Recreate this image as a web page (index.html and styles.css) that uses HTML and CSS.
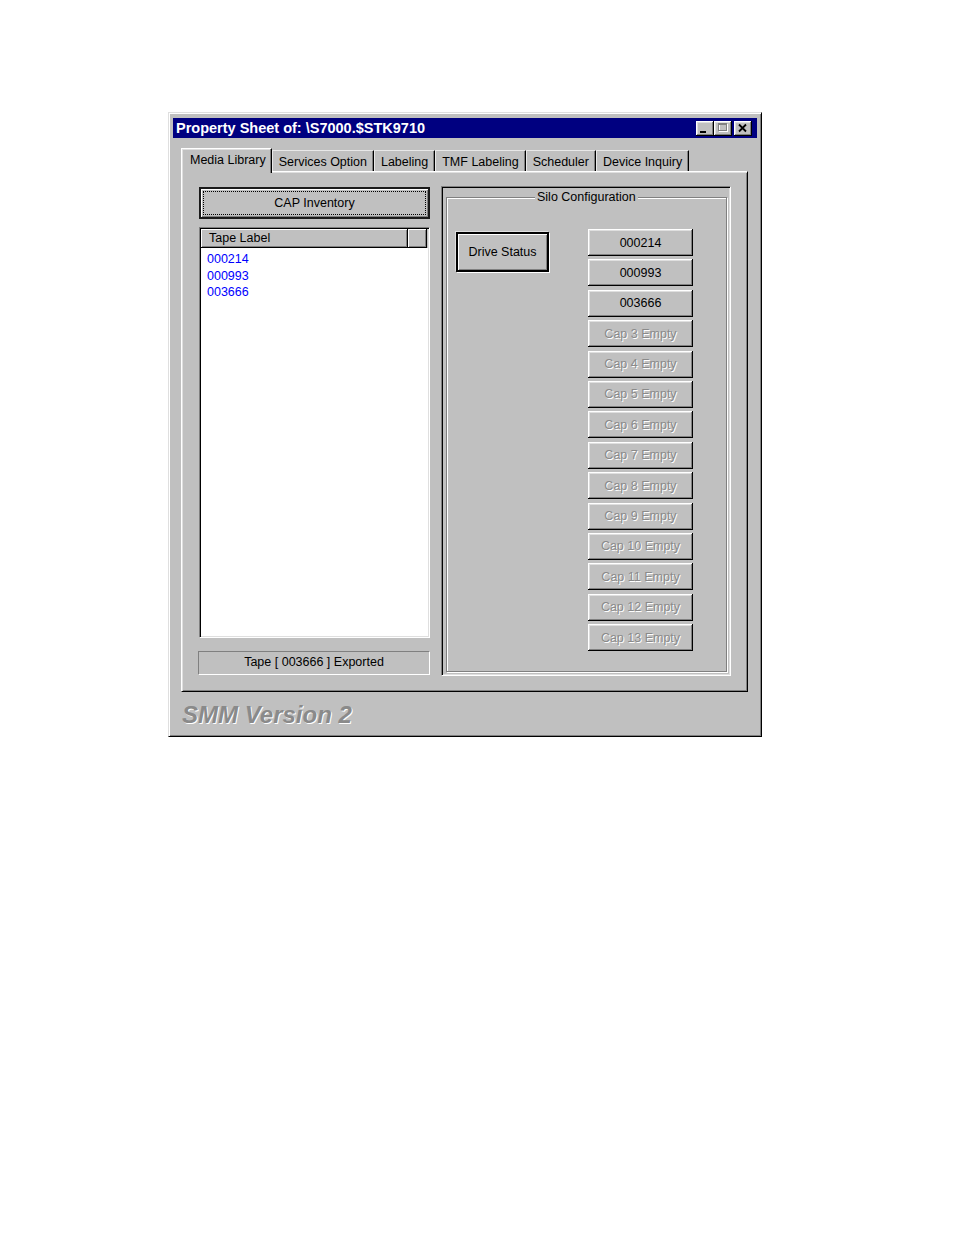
FILE: index.html
```html
<!DOCTYPE html>
<html>
<head>
<meta charset="utf-8">
<title>Property Sheet</title>
<link rel="stylesheet" href="styles.css">
</head>
<body>
<div class="window">
  <div class="titlebar">
    <span class="title">Property Sheet of: \S7000.$STK9710</span>
    <div class="tbtns">
      <span class="tbtn"><svg width="18" height="15" viewBox="0 0 18 15"><rect x="4" y="10" width="6" height="2" fill="#000"/></svg></span>
      <span class="tbtn"><svg width="18" height="15" viewBox="0 0 18 15"><rect x="5.5" y="3.5" width="8" height="7" fill="none" stroke="#fff"/><rect x="4.5" y="2.5" width="8" height="7" fill="none" stroke="#808080"/><rect x="4" y="2" width="9" height="2" fill="#808080"/></svg></span>
      <span class="tbtn close"><svg width="18" height="15" viewBox="0 0 18 15"><path d="M5 3.5 L12 10.5 M12 3.5 L5 10.5" stroke="#000" stroke-width="1.8" fill="none"/></svg></span>
    </div>
  </div>

  <div class="tabs">
    <div class="tab active">Media Library</div>
    <div class="tab">Services Option</div>
    <div class="tab">Labeling</div>
    <div class="tab">TMF Labeling</div>
    <div class="tab">Scheduler</div>
    <div class="tab">Device Inquiry</div>
  </div>

  <div class="panel">
    <div class="left">
      <div class="btn default cap"><span class="focus">CAP Inventory</span></div>
      <div class="list">
        <div class="lhead">
          <div class="hcol first">Tape Label</div>
          <div class="hcol second"></div>
        </div>
        <div class="lbody">
          <div class="item">000214</div>
          <div class="item">000993</div>
          <div class="item">003666</div>
        </div>
      </div>
      <div class="status">Tape [ 003666 ] Exported</div>
    </div>

    <div class="silo">
      <fieldset class="group">
        <legend>Silo Configuration</legend>
        <div class="silo-body">
          <div class="btn drive">Drive Status</div>
          <div class="caps">
            <div class="btn cbtn">000214</div>
            <div class="btn cbtn">000993</div>
            <div class="btn cbtn">003666</div>
            <div class="btn cbtn disabled">Cap 3 Empty</div>
            <div class="btn cbtn disabled">Cap 4 Empty</div>
            <div class="btn cbtn disabled">Cap 5 Empty</div>
            <div class="btn cbtn disabled">Cap 6 Empty</div>
            <div class="btn cbtn disabled">Cap 7 Empty</div>
            <div class="btn cbtn disabled">Cap 8 Empty</div>
            <div class="btn cbtn disabled">Cap 9 Empty</div>
            <div class="btn cbtn disabled">Cap 10 Empty</div>
            <div class="btn cbtn disabled">Cap 11 Empty</div>
            <div class="btn cbtn disabled">Cap 12 Empty</div>
            <div class="btn cbtn disabled">Cap 13 Empty</div>
          </div>
        </div>
      </fieldset>
    </div>
  </div>

  <div class="footer">SMM Version 2</div>
</div>
</body>
</html>
```

FILE: styles.css
```css
* { box-sizing: border-box; }

body {
  margin: 0;
  background: #fff;
  font-family: "Liberation Sans", Arial, sans-serif;
  font-size: 12.5px;
  color: #000;
}

.window {
  margin: 112px 0 0 168px;
  width: 594px;
  height: 625px;
  background: #c0c0c0;
  border: 1px solid;
  border-color: #dfdfdf #000 #000 #dfdfdf;
  box-shadow: inset 1px 1px #fff, inset -1px -1px #808080;
  padding: 5px 4px 4px 4px;
  display: flex;
  flex-direction: column;
}

.titlebar {
  height: 20px;
  background: #000080;
  color: #fff;
  display: flex;
  align-items: center;
  padding: 0 5px 0 3px;
}

.title {
  font-weight: bold;
  font-size: 14.5px;
  line-height: 20px;
  white-space: nowrap;
}

.tbtns {
  margin-left: auto;
  display: flex;
  align-items: center;
}

.tbtn {
  width: 18px;
  height: 15px;
  background: #c0c0c0;
  box-shadow: inset -1px -1px #000, inset 1px 1px #fff, inset -2px -2px #808080, inset 2px 2px #dfdfdf;
  display: block;
}

.tbtn svg { display: block; }

.tbtn.close { margin-left: 2px; }

.tabs {
  display: flex;
  align-items: flex-end;
  height: 25px;
  margin: 10px 0 -2px 8px;
  position: relative;
  z-index: 1;
}

.tab {
  height: 21px;
  margin-bottom: 2px;
  padding: 4px 6px 0 6px;
  line-height: 14px;
  white-space: nowrap;
  border-left: 1px solid #e8e8e8;
  border-top: 1px solid #e8e8e8;
  border-right: 1px solid #000;
  box-shadow: inset -1px 0 #808080;
  background: #c0c0c0;
}

.tab.active {
  height: 25px;
  margin-bottom: 0;
  padding: 4px 5px 0 8px;
  border-left-color: #fff;
  border-top-color: #fff;
  box-shadow: inset -1px 0 #808080, inset 1px 1px #dfdfdf;
}

.panel {
  margin-left: 8px;
  width: 567px;
  height: 521px;
  border: 1px solid;
  border-color: #fff #000 #000 #fff;
  box-shadow: inset 1px 1px #dfdfdf, inset -1px -1px #808080;
  padding: 15px 16px 15px 17px;
  display: flex;
  gap: 11px;
  align-items: flex-start;
}

.left {
  width: 231px;
  display: flex;
  flex-direction: column;
}

.btn {
  background: #c0c0c0;
  box-shadow: inset -1px -1px #000, inset 1px 1px #fff, inset -2px -2px #808080, inset 2px 2px #dfdfdf;
  display: flex;
  align-items: center;
  justify-content: center;
  white-space: nowrap;
  line-height: 14px;
}

.btn.default {
  border: 2px solid #1a1a1a;
  box-shadow: inset 1px 1px #fff, inset -1px -1px #808080;
}

.cap {
  height: 32px;
  padding: 2px;
}

.cap .focus {
  flex: 1;
  align-self: stretch;
  border: 1px dotted #000;
  display: flex;
  align-items: center;
  justify-content: center;
}

.list {
  margin-top: 8px;
  height: 411px;
  background: #fff;
  border: 1px solid;
  border-color: #808080 #fff #fff #808080;
  box-shadow: inset 1px 1px #000, inset -1px -1px #dfdfdf;
  padding: 1px;
  display: flex;
  flex-direction: column;
}

.lhead {
  display: flex;
  height: 19px;
  background: #c0c0c0;
}

.hcol {
  height: 19px;
  box-shadow: inset -1px -1px #000, inset 1px 1px #fff, inset -2px -2px #808080;
  line-height: 19px;
  padding-left: 8px;
}

.hcol.first { width: 207px; }
.hcol.second { width: 19px; }

.lbody {
  padding: 3px 0 0 6px;
}

.item {
  color: #0000ff;
  line-height: 16.5px;
}

.status {
  margin-top: 13px;
  height: 24px;
  margin-left: -1px;
  border: 1px solid;
  border-color: #808080 #fff #fff #808080;
  display: flex;
  align-items: center;
  justify-content: center;
  line-height: 14px;
  padding-bottom: 2px;
}

.silo {
  width: 290px;
  height: 490px;
  margin-top: -1px;
  border: 1px solid;
  border-color: #808080 #fff #fff #808080;
  box-shadow: inset 1px 1px #000, inset -1px -1px #dfdfdf;
  padding: 3px 3px 3px 4px;
}

.group {
  margin: 0;
  height: 100%;
  min-width: 0;
  border: 1px solid #808080;
  box-shadow: inset 1px 1px #fff, 1px 1px #fff;
  padding: 0 33px 0 9px;
}

.group legend {
  margin-left: 79px;
  padding: 0 2px;
  line-height: 14px;
  background: #c0c0c0;
}

.silo-body {
  display: flex;
  align-items: flex-start;
  padding-top: 25px;
}

.drive {
  width: 93px;
  height: 40px;
  margin-top: 3px;
  border: 2px solid #000;
  box-shadow: inset 1px 1px #fff, inset -1px -1px #808080, 1px 1px #fff, -1px -1px #dfdfdf;
}

.caps {
  margin-left: auto;
  width: 105px;
  display: flex;
  flex-direction: column;
  gap: 3.4px;
}

.cbtn {
  height: 27px;
}

.cbtn.disabled {
  color: #8a8a8a;
  text-shadow: 1px 1px 0 #fff;
}

.footer {
  margin: 9px 0 0 9px;
  font-size: 24px;
  font-weight: bold;
  font-style: italic;
  line-height: 28px;
  color: #8a8a8a;
  text-shadow: 1px 1px 0 #fff;
  white-space: nowrap;
}
```
